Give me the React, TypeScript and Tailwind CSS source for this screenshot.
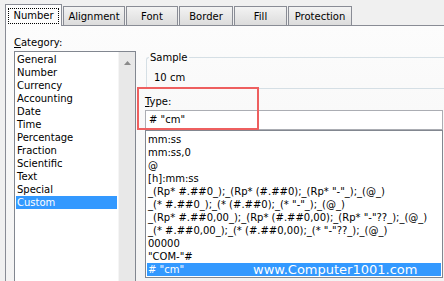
import React from 'react';

// tab strip of the Format Cells dialog
const tabs = [
  { label: 'Number', width: 'w-[57px]', active: true },
  { label: 'Alignment', width: 'w-[62px]', active: false },
  { label: 'Font', width: 'w-[52px]', active: false },
  { label: 'Border', width: 'w-[54px]', active: false },
  { label: 'Fill', width: 'w-[53px]', active: false },
  { label: 'Protection', width: 'w-[64px]', active: false },
];

const categories = [
  'General', 'Number', 'Currency', 'Accounting', 'Date', 'Time',
  'Percentage', 'Fraction', 'Scientific', 'Text', 'Special', 'Custom',
];

const formats = [
  'mm:ss',
  'mm:ss,0',
  '@',
  '[h]:mm:ss',
  '_(Rp* #.##0_);_(Rp* (#.##0);_(Rp* "-"_);_(@_)',
  '_(* #.##0_);_(* (#.##0);_(* "-"_);_(@_)',
  '_(Rp* #.##0,00_);_(Rp* (#.##0,00);_(Rp* "-"??_);_(@_)',
  '_(* #.##0,00_);_(* (#.##0,00);_(* "-"??_);_(@_)',
  '00000',
  '"COM-"#',
  '# "cm"',
];

export default function App() {
  return (
    <div className="relative w-[444px] h-[281px] overflow-hidden bg-[#f0f0f0] font-['DejaVu_Sans',sans-serif] text-[10px] leading-[13px] text-black">
      {/* tabs */}
      <div className="flex items-end gap-[1px] h-[25px] pl-[5px]">
        {tabs.map((t) =>
          t.active ? (
            <div
              key={t.label}
              className={`${t.width} h-[22px] -mb-[1px] relative z-10 flex justify-center pt-[3px] border border-b-0 border-[#898c95] bg-[#fcfcfc]`}
            >
              <span className="h-[16px] px-[4px] border border-dotted border-black leading-[14px]">{t.label}</span>
            </div>
          ) : (
            <div
              key={t.label}
              className={`${t.width} h-[19px] flex justify-center pt-[3px] border border-b-0 border-[#898c95] bg-gradient-to-b from-[#f3f3f3] to-[#dcdcdc]`}
            >
              {t.label}
            </div>
          )
        )}
      </div>

      {/* tab page */}
      <div className="ml-[5px] h-[260px] flex pl-[8px] border-t border-l border-[#898c95] bg-gradient-to-b from-[#fcfcfc] to-[#f3f3f3]">
        <div className="w-[122px] flex flex-col pt-[10px]">
          <div>
            <span className="underline">C</span>ategory:
          </div>
          <div className="mt-[2px] h-[240px] flex border border-[#828790] bg-white">
            <div className="w-[103px] px-[1px] pt-[1px]">
              {categories.map((c) => (
                <div
                  key={c}
                  className={`h-[13px] pl-[1px] ${c === 'Custom' ? 'bg-[#3399ff] text-white' : ''}`}
                >
                  {c}
                </div>
              ))}
            </div>
            <div className="w-[17px] flex justify-center pt-[9px] border-l border-[#f5f5f5] bg-[#e8e8e8]">
              <svg width="7" height="4" viewBox="0 0 7 4">
                <path d="M3.5 0 L7 4 L0 4 Z" fill="#8a8a8a" />
              </svg>
            </div>
          </div>
        </div>

        <div className="ml-[9px] w-[298px] flex flex-col">
          <div className="relative mt-[31px] ml-[1px] w-[300px] h-[32px] border-t border-l border-b border-[#d5dfe5] rounded-tl-[3px]">
            <span className="absolute left-[2px] -top-[7px] px-[1px] bg-[#fbfbfb]">Sample</span>
            <div className="pl-[7px] pt-[13px]">10 cm</div>
          </div>
          <div className="mt-[6px]">
            <span className="underline">T</span>ype:
          </div>
          <div className="mt-[2px] h-[20px] pl-[3px] leading-[18px] border border-[#abadb3] bg-white">
            # "cm"
          </div>
          <div className="h-[148px] pt-[2px] border border-[#828790] bg-white">
            {formats.map((f, i) => (
              <div
                key={i}
                className={`relative h-[13px] mx-[1px] pl-[1px] whitespace-nowrap ${i === formats.length - 1 ? 'bg-[#3399ff] text-white' : ''}`}
              >
                {f}
                {i === formats.length - 1 && (
                  <span className="absolute left-[106px] top-0 text-[13px] leading-[13px] text-white">
                    www.Computer1001.com
                  </span>
                )}
              </div>
            ))}
          </div>
        </div>
      </div>

      {/* red highlight annotation */}
      <div className="absolute left-[137px] top-[87px] w-[122px] h-[43px] border-2 border-[#ee5f5f]" />
    </div>
  );
}
